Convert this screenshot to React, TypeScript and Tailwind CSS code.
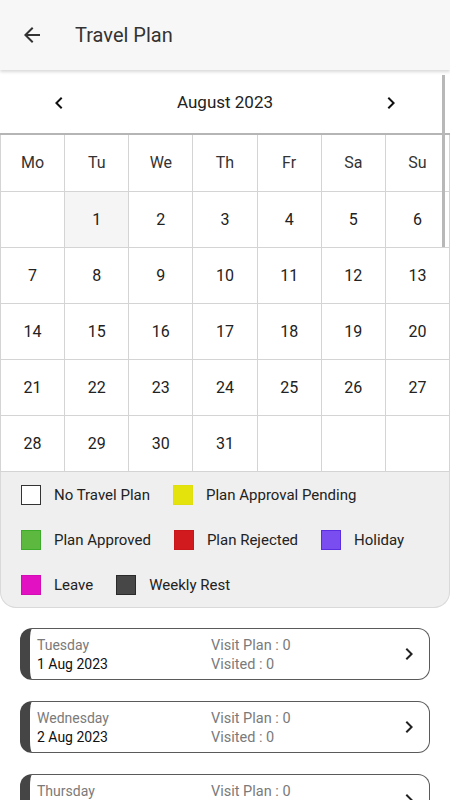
import React from 'react';

type LegendItem = { label: string; box: string };

const legend: LegendItem[] = [
  { label: 'No Travel Plan', box: 'bg-white border-[#333]' },
  { label: 'Plan Approval Pending', box: 'bg-[#e4e30c] border-[#dede10]' },
  { label: 'Plan Approved', box: 'bg-[#5cb83e] border-[#3cab2a]' },
  { label: 'Plan Rejected', box: 'bg-[#d11a1e] border-[#c8161a]' },
  { label: 'Holiday', box: 'bg-[#7a4df0] border-[#5a2ee0]' },
  { label: 'Leave', box: 'bg-[#e211c2] border-[#d40cb6]' },
  { label: 'Weekly Rest', box: 'bg-[#474747] border-[#2a2a2a]' },
];

const dayNames = ['Mo', 'Tu', 'We', 'Th', 'Fr', 'Sa', 'Su'];

const days: (number | null)[] = [
  null,
  ...Array.from({ length: 31 }, (_, i) => i + 1),
  null,
  null,
  null,
];

const plans = [
  { day: 'Tuesday', date: '1 Aug 2023' },
  { day: 'Wednesday', date: '2 Aug 2023' },
  { day: 'Thursday', date: '3 Aug 2023' },
];

const Chevron = ({ dir, className }: { dir: 'left' | 'right'; className?: string }) => (
  <svg viewBox="0 0 24 24" className={className} fill="currentColor">
    {dir === 'left' ? (
      <path d="M15.41 7.41L14 6l-6 6 6 6 1.41-1.41L10.83 12z" />
    ) : (
      <path d="M10 6L8.59 7.41 13.17 12l-4.58 4.59L10 18l6-6z" />
    )}
  </svg>
);

export default function App() {
  return (
    <div className="w-[450px] h-[800px] overflow-hidden bg-white font-['Roboto',sans-serif]">
      {/* app bar */}
      <div className="relative z-10 h-[70px] bg-[#f7f7f7] flex items-center pl-[20px] shadow-[0_2px_3px_rgba(0,0,0,0.15)]">
        <svg viewBox="0 0 24 24" className="w-6 h-6 text-[#333]" fill="currentColor">
          <path d="M20 11H7.83l5.59-5.59L12 4l-8 8 8 8 1.41-1.41L7.83 13H20v-2z" />
        </svg>
        <span className="ml-[31px] text-[20px] text-[#333]">Travel Plan</span>
      </div>

      {/* calendar */}
      <div className="relative mt-[3px]">
        <div className="h-[60px] flex items-center justify-between px-[47px]">
          <Chevron dir="left" className="w-6 h-6 text-[#111]" />
          <span className="text-[17px] text-[#222]">August 2023</span>
          <Chevron dir="right" className="w-6 h-6 text-[#111]" />
        </div>
        <div className="border-t-2 border-[#b5b5b5]" />
        <div className="grid grid-cols-7 border-l border-[#d4d4d4]">
          {dayNames.map((d) => (
            <div
              key={d}
              className="h-[57px] flex items-center justify-center border-r border-b border-[#d4d4d4] text-[16px] text-[#333]"
            >
              {d}
            </div>
          ))}
          {days.map((n, i) => (
            <div
              key={i}
              className={`h-[56px] flex items-center justify-center border-r border-b border-[#d4d4d4] text-[16px] text-[#222] ${
                n === 1 ? 'bg-[#f5f5f5]' : 'bg-white'
              }`}
            >
              {n ?? ''}
            </div>
          ))}
        </div>
        <div className="absolute right-[5px] top-[2px] w-[3px] h-[172px] bg-[#b8b8b8]" />

        {/* legend */}
        <div className="bg-[#efefef] border border-t-0 border-[#d9d9d9] rounded-b-[16px] px-[20px] pt-[13px] pb-[12px] flex flex-wrap gap-x-[23px] gap-y-[25px]">
          {legend.map((l) => (
            <div key={l.label} className="flex items-center h-[20px]">
              <span className={`w-[20px] h-[20px] border ${l.box}`} />
              <span className="ml-[13px] text-[15px] text-[#222]">{l.label}</span>
            </div>
          ))}
        </div>
      </div>

      {/* plan list */}
      <div className="px-[20px] pt-[20px] flex flex-col gap-[21px]">
        {plans.map((p) => (
          <div
            key={p.date}
            className="h-[52px] flex items-start rounded-[12px] border border-[#5a5a5a] border-l-[10px] border-l-[#454545] pl-[7px] pr-[8px]"
          >
            <div className="w-[174px] pt-[7px] leading-[19px] text-[14px]">
              <div className="text-[#7a7a7a]">{p.day}</div>
              <div className="text-[#111]">{p.date}</div>
            </div>
            <div className="flex-1 pt-[7px] leading-[19px] text-[14.5px] text-[#7a7a7a]">
              <div>Visit Plan : 0</div>
              <div>Visited : 0</div>
            </div>
            <Chevron dir="right" className="self-center w-6 h-6 text-[#222]" />
          </div>
        ))}
      </div>
    </div>
  );
}
